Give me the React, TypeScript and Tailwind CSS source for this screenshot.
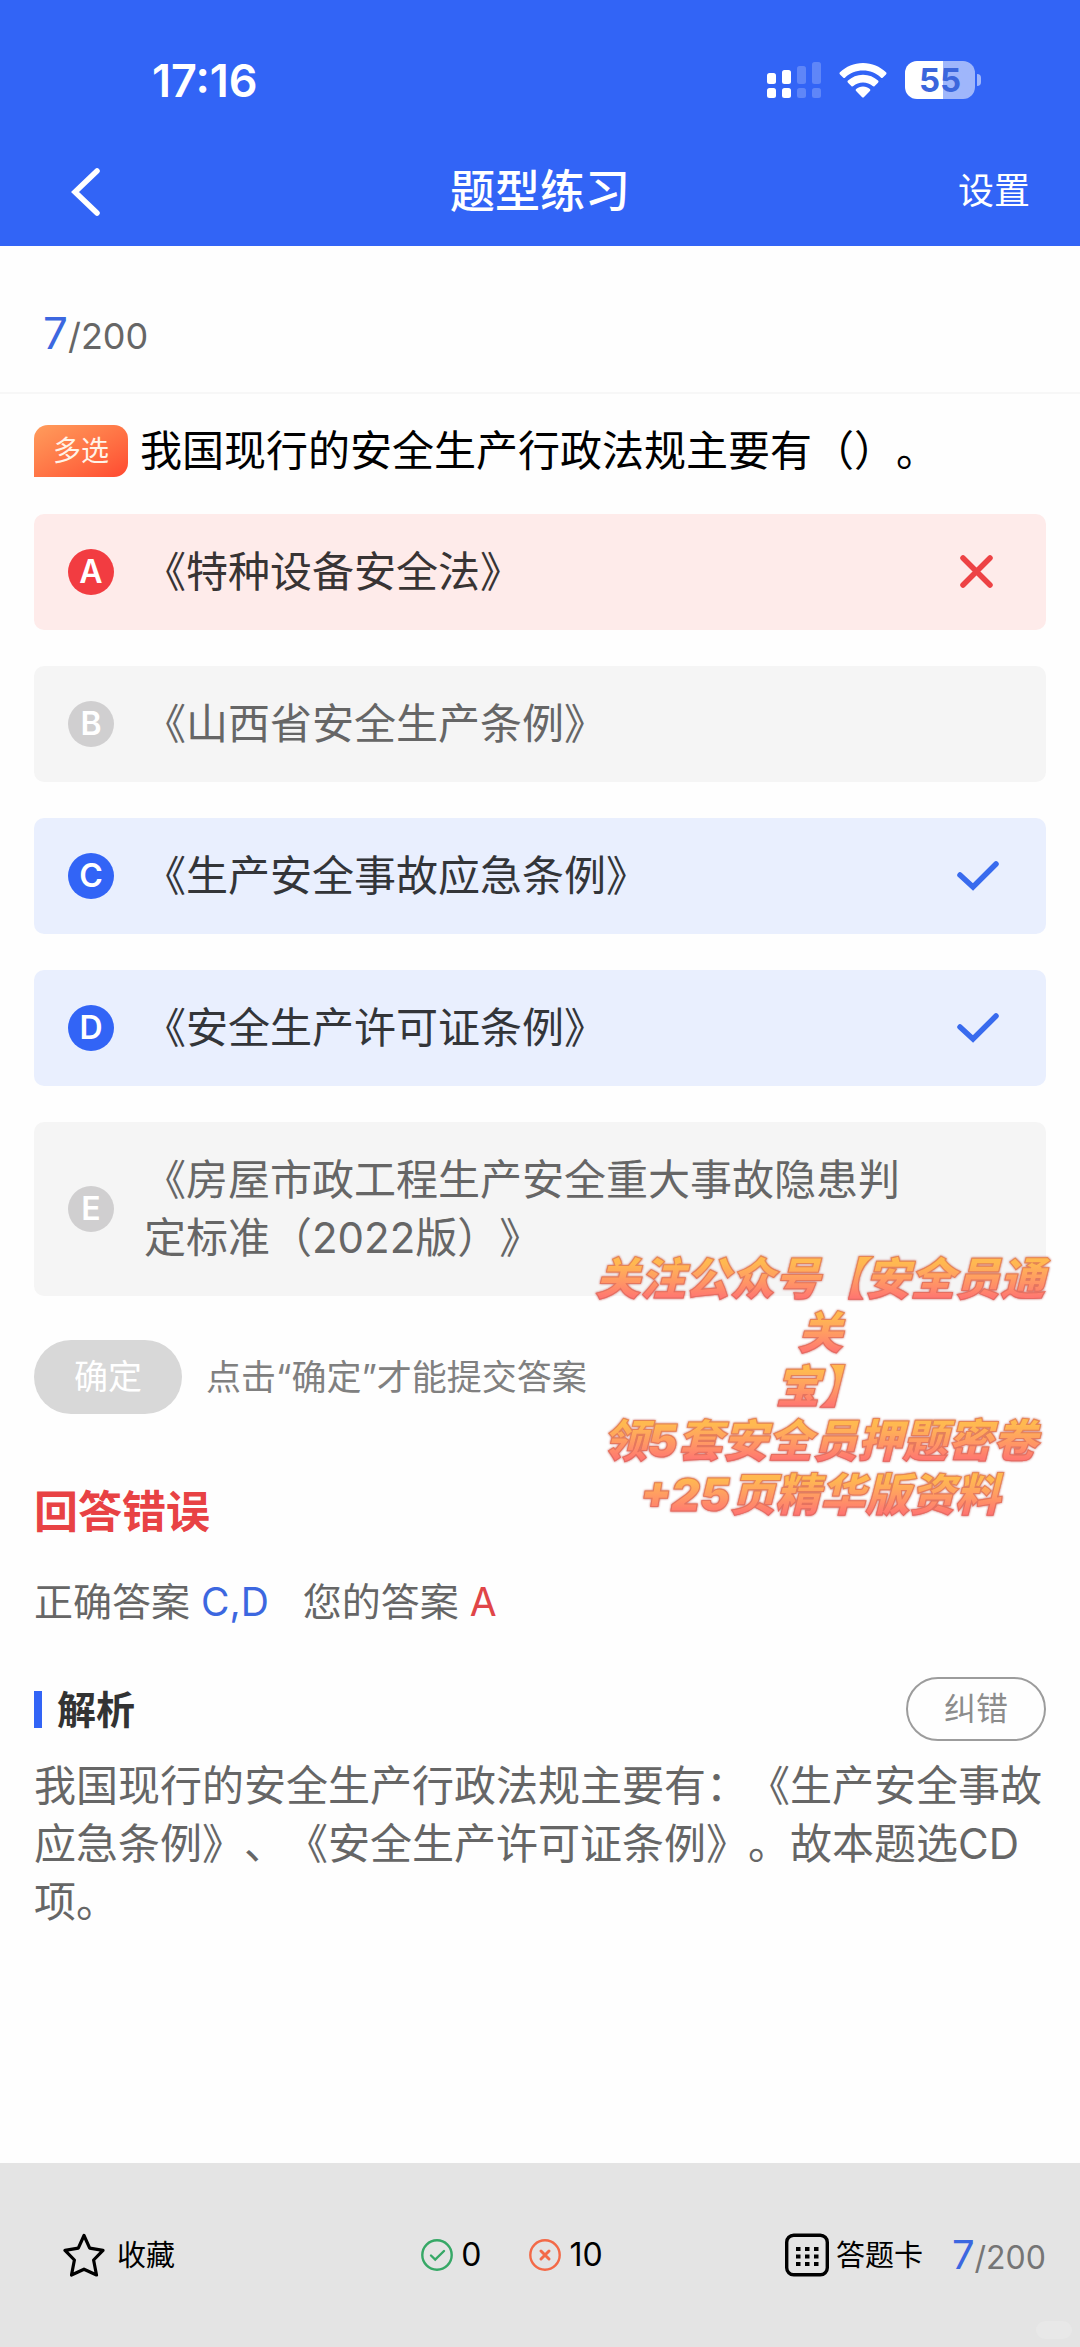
import { useState } from 'react'

type OptionState = 'wrong' | 'correct' | 'idle'

interface Option {
    key: string
    text: string
    state: OptionState
}

const OPTIONS: Option[] = [
    { key: 'A', text: '《特种设备安全法》', state: 'wrong' },
    { key: 'B', text: '《山西省安全生产条例》', state: 'idle' },
    { key: 'C', text: '《生产安全事故应急条例》', state: 'correct' },
    { key: 'D', text: '《安全生产许可证条例》', state: 'correct' },
    { key: 'E', text: '《房屋市政工程生产安全重大事故隐患判定标准（2022版）》', state: 'idle' },
]

const PROMO_LINES = ['关注公众号【安全员通', '关', '宝】', '领5套安全员押题密卷', '+25页精华版资料']

const CARD_STYLES: Record<OptionState, string> = {
    wrong: 'bg-[#feebea] text-[#383434]',
    correct: 'bg-[#e9effe] text-[#333539]',
    idle: 'bg-[#f5f5f5] text-[#666666]',
}

const BADGE_STYLES: Record<OptionState, string> = {
    wrong: 'bg-[#f23c41]',
    correct: 'bg-[#3264f6]',
    idle: 'bg-[#d0cfd0]',
}

function StatusIcons() {
    return (
        <div className="flex items-center gap-[18px]">
            {/* dual sim signal */}
            <svg width="54" height="38" viewBox="0 0 54 38" fill="#fff">
                <rect x="0" y="12" width="9" height="11" rx="2.5" />
                <rect x="15" y="9" width="9" height="14" rx="2.5" />
                <rect x="30" y="5" width="9" height="18" rx="2.5" opacity=".22" />
                <rect x="45" y="1" width="9" height="22" rx="2.5" opacity=".22" />
                <rect x="0" y="27" width="9" height="10" rx="2.5" />
                <rect x="15" y="27" width="9" height="10" rx="2.5" />
                <rect x="30" y="27" width="9" height="10" rx="2.5" opacity=".22" />
                <rect x="45" y="27" width="9" height="10" rx="2.5" opacity=".22" />
            </svg>
            <svg width="48" height="36" viewBox="0 0 48 36" fill="#fff">
                <path d="M24 1C33 1 41 4.500 47 10.300C47.700 11 47.700 11.700 47 12.400L43.900 15.500C43.200 16.200 42.500 16.200 41.800 15.500C37 11 31 8.600 24 8.600S11 11 6.200 15.500C5.500 16.200 4.800 16.200 4.100 15.500L1 12.400C.3 11.700.3 11 1 10.300C7 4.500 15 1 24 1Z" />
                <path d="M24 12.800C30 12.800 35 15 39 18.600C39.700 19.300 39.700 20 39 20.700L35.700 23.900C35 24.600 34.400 24.600 33.700 24C31 21.600 27.800 20.400 24 20.400S17 21.600 14.300 24C13.600 24.600 13 24.600 12.300 23.900L9 20.700C8.300 20 8.300 19.300 9 18.600C13 15 18 12.800 24 12.800Z" />
                <path d="M24 24.500C26.800 24.500 29 25.400 30.800 26.900C31.500 27.500 31.500 28.200 30.900 28.900L25.100 35C24.400 35.700 23.600 35.700 22.900 35L17.100 28.900C16.500 28.200 16.500 27.500 17.200 26.900C19 25.400 21.200 24.500 24 24.500Z" />
            </svg>
            <div className="flex items-center gap-[2px]">
                <div className="flex h-[38px] w-[70px] items-center justify-center rounded-[12px] bg-linear-to-r from-white from-55% to-[#9fb6fb] to-55% text-[33px] leading-[38px] font-bold text-[#3b66dc]">
                    55
                </div>
                <div className="h-3 w-1 rounded-r-full bg-[#9fb6fb]" />
            </div>
        </div>
    )
}

function ResultMark({ state }: { state: OptionState }) {
    return (
        <svg width="44" height="44" viewBox="0 0 44 44" fill="none" strokeWidth="5.500" strokeLinecap="round" strokeLinejoin="round" className="shrink-0">
            {state === 'wrong' && <path d="M7 8L34 35M34 8L7 35" stroke="#ed4245" />}
            {state === 'correct' && <path d="M4 21L17 33L40 10" stroke="#396bee" strokeLinejoin="miter" />}
        </svg>
    )
}

function OptionRow({ option, checked, onToggle }: { option: Option; checked: boolean; onToggle: () => void }) {
    return (
        <label className={`relative flex items-center rounded-[10px] py-[29px] pr-[46px] pl-[34px] ${CARD_STYLES[option.state]}`}>
            <input type="checkbox" className="sr-only" checked={checked} onChange={onToggle} />
            <span className={`flex size-[46px] shrink-0 items-center justify-center rounded-full text-[32px] leading-none font-semibold text-white ${BADGE_STYLES[option.state]}`}>
                {option.key}
            </span>
            <span className="mx-[30px] flex-1 text-[42px] leading-[58px]">{option.text}</span>
            <ResultMark state={option.state} />
        </label>
    )
}

export default function App() {
    const [selected, setSelected] = useState<string[]>(['A'])

    const toggle = (key: string) =>
        setSelected(prev => (prev.includes(key) ? prev.filter(k => k !== key) : [...prev, key]))

    return (
        <div className="flex min-h-screen flex-col bg-[#fefefe] font-['Inter','Noto_Sans_CJK_SC',sans-serif] [text-spacing-trim:space-all]">
            <header className="bg-[#3264f6] text-white">
                <div className="flex h-[136px] items-center justify-between pt-6 pr-[99px] pl-[152px]">
                    <span className="text-[45px] leading-none font-semibold">17:16</span>
                    <StatusIcons />
                </div>
                <nav className="grid h-[110px] grid-cols-3 items-center px-[50px]">
                    <button type="button" aria-label="返回" className="justify-self-start pl-5">
                        <svg width="32" height="50" viewBox="0 0 32 50" fill="none" stroke="#fff" strokeWidth="5.500" strokeLinecap="round">
                            <path d="M27 5L5 26L27 47" />
                        </svg>
                    </button>
                    <h1 className="justify-self-center text-[45px] leading-none font-medium whitespace-nowrap">题型练习</h1>
                    <button type="button" className="justify-self-end text-[36px] leading-none">设置</button>
                </nav>
            </header>

            <div className="flex h-[148px] items-center border-b-2 border-[#f7f7f7] px-[43px] pt-7">
                <p className="text-[36px] leading-none text-[#666666]">
                    <span className="text-[44px] text-[#3c67e0]">7</span>/200
                </p>
            </div>

            <main className="px-[34px] pt-7">
                <div className="flex items-center gap-3">
                    <span className="flex h-[52px] w-[94px] shrink-0 items-center justify-center rounded-[14px] rounded-bl-none bg-linear-to-br from-[#ff9c5c] to-[#ff4730] text-[28px] leading-none text-[#fff3e8]">
                        多选
                    </span>
                    <h2 className="text-[42px] leading-[58px] text-black">我国现行的安全生产行政法规主要有（）。</h2>
                </div>

                <div className="relative">
                    <div className="mt-[34px] flex flex-col gap-9">
                        {OPTIONS.map(o => (
                            <OptionRow key={o.key} option={o} checked={selected.includes(o.key)} onToggle={() => toggle(o.key)} />
                        ))}
                    </div>

                    <div className="mt-11 flex items-center gap-6">
                        <button type="button" className="h-[74px] w-[148px] rounded-full bg-[#d8d8d8] text-[34px] leading-none text-white">
                            确定
                        </button>
                        <p className="text-[35px] leading-none text-[#808080]">点击“确定”才能提交答案</p>
                    </div>

                    {/* promo banner floating over the card */}
                    <div className="pointer-events-none absolute -right-2 -bottom-[108px] w-[468px] text-center text-[45px] leading-[54px] font-black whitespace-nowrap italic">
                        {PROMO_LINES.map(line => (
                            <p
                                key={line}
                                className="bg-linear-to-b from-[#ffb950] from-20% to-[#ff7072] to-90% bg-clip-text text-transparent [-webkit-text-stroke:1px_#d4625899] [filter:drop-shadow(0_0_1px_#c9605a)]"
                            >
                                {line}
                            </p>
                        ))}
                    </div>
                </div>

                <p className="mt-[66px] text-[44px] leading-[64px] font-bold text-[#e84244]">回答错误</p>
                <div className="mt-[29px] flex gap-[34px] text-[39px] leading-[58px] text-[#666666]">
                    <p>正确答案 <span className="text-[#3c67e0]">C,D</span></p>
                    <p>您的答案 <span className="text-[#e04548]">A</span></p>
                </div>

                <div className="mt-[46px] flex items-center justify-between">
                    <h3 className="flex items-center gap-[15px] text-[39px] leading-none font-bold text-[#333333]">
                        <span className="h-[37px] w-2 bg-[#3264f6]" />
                        解析
                    </h3>
                    <button type="button" className="h-16 w-[140px] rounded-full border-2 border-[#9c9c9c] text-[32px] leading-none text-[#8c8c8c]">
                        纠错
                    </button>
                </div>
                <p className="mt-4 text-[42px] leading-[58px] text-[#666666]">
                    我国现行的安全生产行政法规主要有：《生产安全事故应急条例》、《安全生产许可证条例》。故本题选CD项。
                </p>
            </main>

            <footer className="relative mt-auto flex h-[184px] items-center justify-between bg-[#e4e4e4] pr-[34px] pl-[63px] text-black">
                <button type="button" className="flex items-center gap-3 pr-16 text-[29px] leading-none">
                    <svg width="42" height="44" viewBox="0 0 42 44" fill="none" stroke="#000" strokeWidth="3.200" strokeLinejoin="round">
                        <path d="M21 2.500L26.700 15.200L40 17.400L30.600 27L33.500 42L21 36.200L8.500 42L11.400 27L2 17.400L15.300 15.200Z" />
                    </svg>
                    收藏
                </button>

                <div className="flex items-center gap-12 text-[32px] leading-none">
                    <span className="flex items-center gap-2">
                        <svg width="32" height="32" viewBox="0 0 32 32" fill="none" stroke="#36a866" strokeWidth="2.400" strokeLinecap="round">
                            <circle cx="16" cy="16" r="14.700" />
                            <path d="M10 16.500L14.200 20.500L23 12" />
                        </svg>
                        0
                    </span>
                    <span className="flex items-center gap-2">
                        <svg width="32" height="32" viewBox="0 0 32 32" fill="none" stroke="#f36a48" strokeWidth="2.400" strokeLinecap="round">
                            <circle cx="16" cy="16" r="14.700" />
                            <path d="M12 12L20 20M20 12L12 20" strokeWidth="3" />
                        </svg>
                        10
                    </span>
                </div>

                <div className="flex items-center gap-[29px]">
                    <button type="button" className="flex items-center gap-[7px] text-[29px] leading-none">
                        <svg width="44" height="44" viewBox="0 0 44 44">
                            <rect x="1.700" y="2.200" width="40.600" height="39.600" rx="7" fill="none" stroke="#000" strokeWidth="3.400" />
                            {[11, 20, 29].map(x =>
                                [14, 21.500, 29].map(y => <rect key={`${x}-${y}`} x={x} y={y} width="4.500" height="4" fill="#000" />)
                            )}
                        </svg>
                        答题卡
                    </button>
                    <p className="text-[32px] leading-none text-[#757575]">
                        <span className="text-[40px] text-[#3c67e0]">7</span>/200
                    </p>
                </div>
                <span className="absolute right-2 bottom-2 h-[18px] w-9 rounded-full bg-[#e8e8e8]" />
            </footer>
        </div>
    )
}
